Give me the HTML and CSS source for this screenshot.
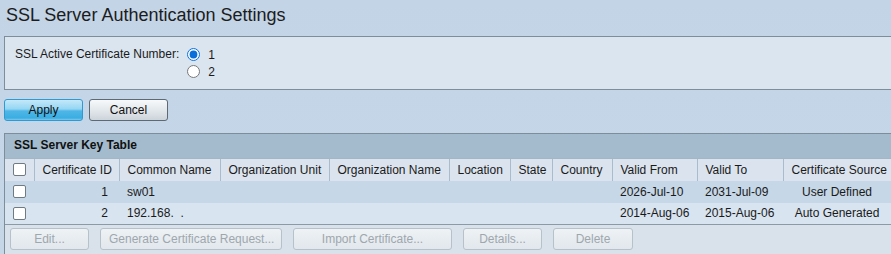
FILE: index.html
```html
<!DOCTYPE html>
<html lang="en">
<head>
  <meta charset="UTF-8">
  <title>SSL Server Authentication Settings</title>
  <link rel="stylesheet" href="styles.css">
</head>
<body>

  <h1 class="page-title">SSL Server Authentication Settings</h1>

  <div class="panel">
    <div class="field-label">SSL Active Certificate Number:</div>
    <div class="radio-list">
      <label class="radio-opt"><input type="radio" name="cert" checked> 1</label>
      <label class="radio-opt"><input type="radio" name="cert"> 2</label>
    </div>
  </div>

  <div class="actions">
    <button class="btn btn-apply">Apply</button>
    <button class="btn btn-cancel">Cancel</button>
  </div>

  <div class="key-table">
    <div class="key-title">SSL Server Key Table</div>
    <table>
      <colgroup>
        <col style="width:29px"><col style="width:85px"><col style="width:101px">
        <col style="width:109px"><col style="width:120px"><col style="width:61px">
        <col style="width:42px"><col style="width:60px"><col style="width:85px">
        <col style="width:86px"><col>
      </colgroup>
      <thead>
        <tr>
          <th class="chk"><span class="box"></span></th>
          <th>Certificate ID</th>
          <th>Common Name</th>
          <th>Organization Unit</th>
          <th>Organization Name</th>
          <th>Location</th>
          <th>State</th>
          <th>Country</th>
          <th>Valid From</th>
          <th>Valid To</th>
          <th>Certificate Source</th>
        </tr>
      </thead>
      <tbody>
        <tr class="odd">
          <td class="chk"><span class="box"></span></td>
          <td class="num">1</td>
          <td>sw01</td>
          <td></td><td></td><td></td><td></td><td></td>
          <td>2026-Jul-10</td>
          <td>2031-Jul-09</td>
          <td class="center">User Defined</td>
        </tr>
        <tr class="even">
          <td class="chk"><span class="box"></span></td>
          <td class="num">2</td>
          <td>192.168.&nbsp;&nbsp;.</td>
          <td></td><td></td><td></td><td></td><td></td>
          <td>2014-Aug-06</td>
          <td>2015-Aug-06</td>
          <td class="center">Auto Generated</td>
        </tr>
      </tbody>
    </table>
    <div class="table-btns">
      <button class="btn btn-off w-edit" disabled>Edit...</button>
      <button class="btn btn-off w-gen" disabled>Generate Certificate Request...</button>
      <button class="btn btn-off w-imp" disabled>Import Certificate...</button>
      <button class="btn btn-off w-det" disabled>Details...</button>
      <button class="btn btn-off w-del" disabled>Delete</button>
    </div>
  </div>

</body>
</html>
```

FILE: styles.css
```css
* {
  box-sizing: border-box;
  font-family: 'Liberation Sans', Arial, sans-serif;
}

html, body {
  margin: 0;
  padding: 0;
  height: 100%;
  overflow: hidden;
}

body {
  background: linear-gradient(to bottom, #c2d4e6, #c6d7e8);
  color: #1a1a1a;
  font-size: 12px;
}

.page-title {
  font-size: 18px;
  font-weight: normal;
  line-height: 20px;
  margin: 5px 0 0 6px;
  color: #1c1c1c;
}

.panel {
  margin: 11px 0 0 4px;
  height: 54px;
  background: #dae5ef;
  border: 1px solid #7d8d9a;
  border-right: none;
  display: flex;
  padding: 10px 0 0 10px;
}

.field-label {
  line-height: 15px;
  margin-right: 8px;
}

.radio-list {
  display: flex;
  flex-direction: column;
  gap: 2px;
}

.radio-opt {
  display: flex;
  align-items: center;
  height: 15px;
  font-size: 12px;
}

.radio-opt input {
  margin: 0 8px 0 0;
  width: 13px;
  height: 13px;
  accent-color: #0a6fd8;
}

.actions {
  margin: 9px 0 0 4px;
  display: flex;
  gap: 6px;
}

.btn {
  height: 22px;
  border-radius: 3px;
  font-size: 12px;
  padding: 0 8px;
  color: #111;
  white-space: nowrap;
}

.btn-apply {
  width: 79px;
  border: 1px solid #2f9ad0;
  background: linear-gradient(to bottom, #c4e9f9 0%, #94d6f3 45%, #4fb6e6 55%, #3aaee2 90%, #7ccaee 100%);
}

.btn-cancel {
  width: 79px;
  border: 1px solid #5e6a73;
  background: linear-gradient(to bottom, #f7f9fa 0%, #e3e8ec 50%, #cdd4da 100%);
}

.key-table {
  margin: 12px 0 0 4px;
  border-left: 1px solid #7d8d9a;
  border-top: 1px solid #7d8d9a;
  background: #d9e2eb;
  height: 121px;
}

.key-title {
  background: #a3bbcc;
  height: 24px;
  line-height: 23px;
  padding-left: 9px;
  font-weight: bold;
  color: #111;
}

table {
  width: 100%;
  table-layout: fixed;
  border-collapse: collapse;
  border-bottom: 1px solid #8a9aa7;
}

th {
  background: #dbe4ee;
  font-weight: normal;
  text-align: left;
  height: 22px;
  padding: 0 8px;
  border-top: 1px solid #a2b6c6;
  border-left: 1px solid #a9bccb;
  white-space: nowrap;
  overflow: hidden;
}

th:first-child {
  border-left: none;
}

td {
  height: 22px;
  padding: 0 8px;
  white-space: nowrap;
}

tr.odd td { background: #c6d7e7; }
tr.even td { background: #d8e4f0; }

td.num {
  text-align: right;
  padding-right: 11px;
}

td.center {
  text-align: center;
}

.chk {
  padding: 0 0 0 8px;
}

.box {
  display: block;
  width: 13px;
  height: 13px;
  background: #fff;
  border: 1px solid #6f7a83;
  border-radius: 2px;
}

.table-btns {
  display: flex;
  gap: 11px;
  padding: 3px 0 0 5px;
}

.btn-off {
  color: #9ea7ae;
  border: 1px solid #b6c1c9;
  background: linear-gradient(to bottom, #eef2f5, #e1e7ec);
}

.w-edit { width: 79px; }
.w-gen { width: 182px; }
.w-imp { width: 159px; }
.w-det { width: 79px; }
.w-del { width: 80px; }
```
